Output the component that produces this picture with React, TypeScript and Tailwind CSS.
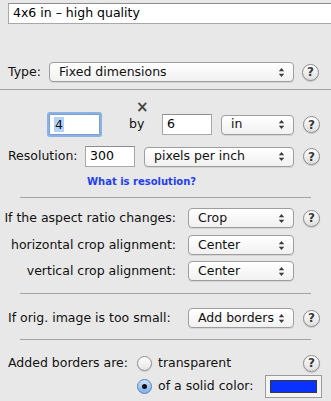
import React from "react";

const Arrows = () => (
  <svg width="7" height="11" viewBox="0 0 7 11" className="shrink-0">
    <path d="M3.5 1 L6.2 4.3 L0.8 4.3 Z" fill="#3a3a3a" />
    <path d="M3.5 10 L6.2 6.7 L0.8 6.7 Z" fill="#3a3a3a" />
  </svg>
);

const Popup = ({ label, w }: { label: string; w: string }) => (
  <div
    className={`${w} h-[20px] shrink-0 flex items-center justify-between pl-[9px] pr-[8px] rounded-[4px] border border-[#9e9e9e] bg-gradient-to-b from-[#ffffff] to-[#f1f1f1] shadow-[0_1px_0_rgba(0,0,0,0.08)] text-[12.5px] text-[#111]`}
  >
    <span className="leading-none whitespace-nowrap">{label}</span>
    <Arrows />
  </div>
);

const Help = () => (
  <div className="w-[17px] h-[17px] shrink-0 rounded-full border border-[#8c8c8c] bg-gradient-to-b from-[#ffffff] to-[#dedede] shadow-[0_1px_1px_rgba(0,0,0,0.15)] flex items-center justify-center text-[12px] font-bold text-[#3a3a3a] leading-none">
    ?
  </div>
);

const Field = ({ value, w }: { value: string; w: string }) => (
  <div
    className={`${w} h-[21px] shrink-0 bg-white border border-[#a8a8a8] border-t-[#8e8e8e] flex items-center pl-[4px] text-[12.5px] text-black`}
  >
    {value}
  </div>
);

const Sep = () => <div className="mx-[20px] h-[1px] bg-[#a3a3a3]" />;

const Radio = ({ on }: { on?: boolean }) =>
  on ? (
    <div className="w-[15px] h-[15px] shrink-0 rounded-full border border-[#5b7fb5] bg-gradient-to-b from-[#cfe3fb] to-[#7fb0ec] flex items-center justify-center">
      <div className="w-[5px] h-[5px] rounded-full bg-[#111]" />
    </div>
  ) : (
    <div className="w-[15px] h-[15px] shrink-0 rounded-full border border-[#8e8e8e] bg-gradient-to-b from-[#ffffff] to-[#e4e4e4] shadow-[0_1px_1px_rgba(0,0,0,0.12)]" />
  );

export default function App() {
  return (
    <div
      className="w-[331px] h-[401px] overflow-hidden bg-[#e8e8e8] text-[12.5px] text-[#111] flex flex-col whitespace-nowrap"
      style={{ fontFamily: '"DejaVu Sans", Verdana, sans-serif' }}
    >
      {/* name field */}
      <div className="mt-[3px] ml-[8px] w-[330px] h-[21px] shrink-0 bg-white border border-[#a8a8a8] border-t-[#8e8e8e] flex items-center pl-[4px] text-[12.5px] text-black">
        4x6 in – high quality
      </div>

      {/* Type row */}
      <div className="mt-[38px] h-[20px] shrink-0 flex items-center pl-[8px]">
        <span className="w-[41px] shrink-0">Type:</span>
        <Popup label="Fixed dimensions" w="w-[245px]" />
        <div className="ml-[8px]">
          <Help />
        </div>
      </div>

      <div className="mt-[7px] h-[1px] shrink-0 bg-[#a3a3a3]" />

      {/* × */}
      <div className="mt-[11px] h-[12px] shrink-0 flex items-center pl-[136px] text-[15px] font-bold text-[#444] leading-none">
        ×
      </div>

      {/* dims row */}
      <div className="mt-[1px] h-[21px] shrink-0 flex items-center pl-[49px]">
        <div className="w-[51px] h-[21px] shrink-0 bg-white border border-[#7a9fd0] shadow-[0_0_0_2px_rgba(110,160,225,0.75)] rounded-[1px] flex items-center pl-[4px]">
          <span className="bg-[#b4d3fb] leading-[15px] px-[1px]">4</span>
        </div>
        <div className="w-[29px] shrink-0" />
        <span className="w-[33px] shrink-0">by</span>
        <Field value="6" w="w-[50px]" />
        <div className="ml-[9px]">
          <Popup label="in" w="w-[73px]" />
        </div>
        <div className="ml-[9px]">
          <Help />
        </div>
      </div>

      {/* Resolution row */}
      <div className="mt-[11px] h-[21px] shrink-0 flex items-center pl-[8px]">
        <span className="w-[77px] shrink-0">Resolution:</span>
        <Field value="300" w="w-[50px]" />
        <div className="ml-[9px]">
          <Popup label="pixels per inch" w="w-[150px]" />
        </div>
        <div className="ml-[9px]">
          <Help />
        </div>
      </div>

      <div className="mt-[7px] h-[14px] shrink-0 flex items-center pl-[87px] text-[10px] font-bold text-[#1f3ff2]">
        What is resolution?
      </div>

      <div className="mt-[9px] shrink-0">
        <Sep />
      </div>

      {/* aspect */}
      <div className="mt-[10px] h-[20px] shrink-0 flex items-center">
        <span className="w-[180px] shrink-0 text-right pr-[4px]">If the aspect ratio changes:</span>
        <div className="ml-[8px]">
          <Popup label="Crop" w="w-[106px]" />
        </div>
        <div className="ml-[9px]">
          <Help />
        </div>
      </div>
      <div className="mt-[7px] h-[20px] shrink-0 flex items-center">
        <span className="w-[180px] shrink-0 text-right pr-[4px]">horizontal crop alignment:</span>
        <div className="ml-[8px]">
          <Popup label="Center" w="w-[106px]" />
        </div>
      </div>
      <div className="mt-[6px] h-[20px] shrink-0 flex items-center">
        <span className="w-[180px] shrink-0 text-right pr-[4px]">vertical crop alignment:</span>
        <div className="ml-[8px]">
          <Popup label="Center" w="w-[106px]" />
        </div>
      </div>

      <div className="mt-[12px] shrink-0">
        <Sep />
      </div>

      {/* orig */}
      <div className="mt-[14px] h-[20px] shrink-0 flex items-center">
        <span className="w-[180px] shrink-0 pl-[8px]">If orig. image is too small:</span>
        <div className="ml-[8px]">
          <Popup label="Add borders" w="w-[106px]" />
        </div>
        <div className="ml-[9px]">
          <Help />
        </div>
      </div>

      <div className="mt-[11px] shrink-0">
        <Sep />
      </div>

      {/* borders */}
      <div className="mt-[15px] h-[16px] shrink-0 flex items-center pl-[8px] pr-[11px]">
        <span className="w-[129px] shrink-0">Added borders are:</span>
        <Radio />
        <span className="ml-[6px]">transparent</span>
        <div className="ml-auto">
          <Help />
        </div>
      </div>
      <div className="mt-[3px] h-[24px] shrink-0 flex items-center pl-[137px] pr-[9px]">
        <Radio on />
        <span className="ml-[6px]">of a solid color:</span>
        <div className="ml-auto w-[57px] h-[23px] shrink-0 border border-[#9a9a9a] bg-[#f4f4f4] flex items-center justify-center">
          <div className="w-[47px] h-[13px] bg-[#0a32ff] border border-[#3a3a3a]" />
        </div>
      </div>
    </div>
  );
}
